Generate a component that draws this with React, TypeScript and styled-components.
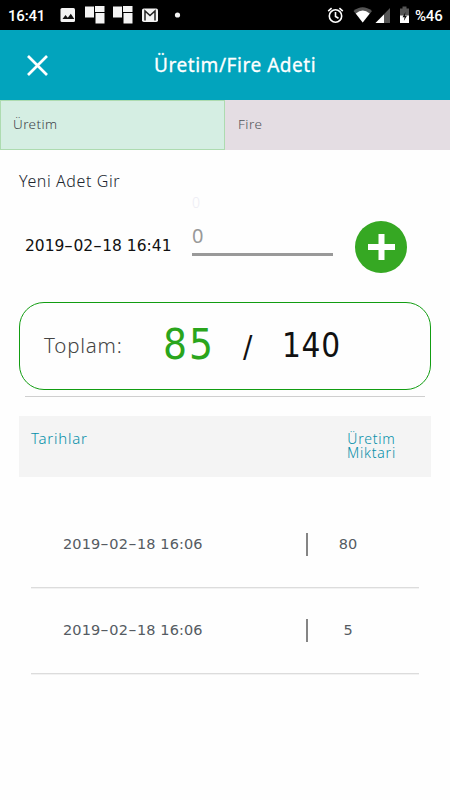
import React from "react";
import styled, { createGlobalStyle } from "styled-components";

const GlobalStyle = createGlobalStyle`
  * { box-sizing: border-box; }
  html, body { margin: 0; background: #fefefe; }
  body { font-family: "Noto Sans", "DejaVu Sans", sans-serif; }
`;

const Screen = styled.main`
  display: flex;
  flex-direction: column;
  width: 450px;
  height: 800px;
  overflow: hidden;
  background: #fefefe;
`;

const StatusBar = styled.div`
  display: flex;
  align-items: center;
  height: 30px;
  background: #000;
  color: #fff;
  font: 500 15px/30px Roboto, sans-serif;
`;

const Clock = styled.span`
  width: 60px;
  padding: 2px 0 0 8px;
  letter-spacing: -0.2px;
`;

const StatusIcons = styled.svg`
  flex: none;
  display: block;
`;

const Battery = styled.span`
  padding: 2px 0 0 2px;
  letter-spacing: -0.2px;
`;

const Header = styled.header`
  display: flex;
  align-items: center;
  height: 70px;
  background: #02a4bd;
  color: #fff;
`;

const CloseButton = styled.button`
  width: 75px;
  height: 70px;
  padding: 0 0 0 27px;
  border: 0;
  background: none;
  svg { display: block; }
`;

type Face = "text" | "narrow" | "wide";

const families: Record<Face, string> = {
  text: '"Noto Sans"',
  narrow: '"DejaVu Sans Condensed", "DejaVu Sans"',
  wide: '"DejaVu Sans"',
};

const Label = styled.span<{ $size: number; $gap?: number; $color?: string; $weight?: number; $face?: Face }>`
  display: block;
  font-family: ${(p) => families[p.$face ?? "text"]}, sans-serif;
  font-stretch: ${(p) => (p.$face === "narrow" ? "condensed" : "normal")};
  font-size: ${(p) => p.$size}px;
  font-weight: ${(p) => p.$weight ?? 400};
  letter-spacing: ${(p) => p.$gap ?? 0}px;
  color: ${(p) => p.$color ?? "inherit"};
  line-height: 1;
  white-space: nowrap;
`;

const Dash = styled.span`
  display: inline-block;
  width: 9px;
  letter-spacing: 0;
  text-align: center;
  transform: scaleX(1.6);
`;

const TitleBox = styled.h1`
  margin: 0;
  padding-left: 79px;
  -webkit-text-stroke: 0.3px #fff;
`;

const Tabs = styled.nav`
  display: grid;
  grid-template-columns: 1fr 1fr;
  height: 50px;
`;

const Tab = styled.button<{ $active?: boolean }>`
  display: flex;
  align-items: center;
  padding: 0 0 0 12px;
  border: 1px solid ${(p) => (p.$active ? "#addbb0" : "#e4dde3")};
  background: ${(p) => (p.$active ? "#d5eee3" : "#e4dde3")};
`;

const SectionTitle = styled.h2`
  margin: 0;
  padding: 23px 0 0 19px;
  height: 43px;
`;

const EntryForm = styled.section`
  display: flex;
  height: 109px;
`;

const EntryDate = styled.div`
  width: 192px;
  padding: 46px 0 0 25px;
`;

const Field = styled.div`
  display: flex;
  flex-direction: column;
  width: 141px;
  height: 63px;
  padding: 3px 0 0;
  border-bottom: 3px solid #999;
`;

const FieldValue = styled.div`
  padding-top: 16px;
`;

const AddButton = styled.button`
  width: 52px;
  height: 52px;
  margin: 28px 0 0 22px;
  padding: 0;
  border: 0;
  border-radius: 50%;
  background: #36a823;
  svg { display: block; }
`;

const Total = styled.section`
  display: flex;
  align-items: center;
  height: 88px;
  margin: 0 19px;
  padding: 0 0 2px 24px;
  border: 1.4px solid #129d12;
  border-radius: 25px;
`;

const TotalLabel = styled.div` width: 119px; `;
const Done = styled.div` width: 80px; `;
const Slash = styled.div` width: 39px; padding-top: 2px; `;

const Divider = styled.hr`
  width: 400px;
  height: 1px;
  margin: 6px 25px 19px;
  border: 0;
  background: #cfcfcf;
`;

const TableHead = styled.div`
  display: flex;
  justify-content: space-between;
  height: 61px;
  margin: 0 19px 25px;
  padding: 15px 35px 0 12px;
  background: #f4f4f4;
`;

const AmountHead = styled.div`
  display: flex;
  flex-direction: column;
  align-items: center;
  padding-top: 1px;
`;

const Row = styled.div`
  display: flex;
  align-items: center;
  height: 86px;
  margin: 0 31px;
  border-bottom: 1px solid #dcdcdc;
  box-shadow: 0 1px #f2f2f2;
`;

const RowDate = styled.div` width: 275px; padding: 0 0 1px 32px; `;
const Bar = styled.i` width: 2px; height: 23px; background: #858585; `;
const Amount = styled.div` width: 80px; padding-bottom: 1px; text-align: center; `;

function Stamp({ value }: { value: string }) {
  return (
    <>
      {value.split("-").map((part, i) => (
        <React.Fragment key={i}>
          {i > 0 && <Dash>-</Dash>}
          {part}
        </React.Fragment>
      ))}
    </>
  );
}

const rows = [
  { date: "2019-02-18 16:06", amount: 80 },
  { date: "2019-02-18 16:06", amount: 5 },
];

export default function App() {
  return (
    <Screen>
      <GlobalStyle />
      <StatusBar>
        <Clock>16:41</Clock>
        <StatusIcons width="266" height="30" viewBox="60 0 266 30" fill="#f3f3f3">
          <rect x="60.5" y="8" width="14.5" height="14" rx="1.5" />
          <path d="M62.5 19l3-4 2.3 2.8 3-4 3.5 5.2z" fill="#111" />
          {[85, 113].map((x) => (
            <g key={x}>
              <rect x={x} y="6.5" width="9" height="11" />
              <rect x={x + 10} y="6" width="9.5" height="6" />
              <rect x={x + 10.5} y="13" width="9" height="10.5" />
            </g>
          ))}
          <rect x="142" y="8.5" width="16" height="13.5" rx="1.8" />
          <path d="M145 20.5V11l5 4.5 5-4.5v9.5" fill="none" stroke="#222" strokeWidth="1.5" />
          <circle cx="177.5" cy="15" r="2.6" />
        </StatusIcons>
        <StatusIcons width="87" height="30" viewBox="326 0 87 30">
          <g fill="none" stroke="#fff" strokeWidth="1.6">
            <circle cx="335.5" cy="16" r="6.2" />
            <path d="M335.5 12v4.5l3 1.8M328.2 11.2l3.4-3M342.8 11.2l-3.4-3" />
          </g>
          <path d="M353.5 11Q362.5 3.500 372 11L362.700 22.500z" fill="#555" />
          <path d="M355.800 13.500Q362.700 7.500 369.700 13.500L362.700 22.500z" fill="#fff" />
          <path d="M375.500 23L390 8v15z" fill="#555" />
          <path d="M375.500 23l8.500-8.500V23z" fill="#fff" />
          <path d="M400 8.500h2.500v-2h4v2h2.500V16h-9z" fill="#555" />
          <path d="M400 15.500h9V23h-9z" fill="#fff" />
          <path d="M405.500 12l-3 5.200h2.100l-.8 3.800 3.200-5.200h-2.100z" fill="#111" />
        </StatusIcons>
        <Battery>%46</Battery>
      </StatusBar>

      <Header>
        <CloseButton aria-label="Kapat">
          <svg width="21" height="21" viewBox="0 0 21 21" fill="none" stroke="#fff" strokeWidth="2.7">
            <path d="M1 1l19 19M20 1L1 20" />
          </svg>
        </CloseButton>
        <TitleBox><Label $size={19} $gap={0.55}>Üretim/Fire Adeti</Label></TitleBox>
      </Header>

      <Tabs>
        <Tab $active><Label $size={13.5} $weight={300} $gap={0.4} $color="#3f444a">Üretim</Label></Tab>
        <Tab><Label $size={13.5} $weight={300} $gap={0.5} $color="#50555a">Fire</Label></Tab>
      </Tabs>

      <SectionTitle><Label $size={16} $weight={300} $gap={0.6} $color="#20262e">Yeni Adet Gir</Label></SectionTitle>

      <EntryForm>
        <EntryDate><Label $face="wide" $size={15.5} $color="#111"><Stamp value="2019-02-18 16:41" /></Label></EntryDate>
        <Field>
          <Label $size={14} $weight={300} $color="#ececf4">0</Label>
          <FieldValue><Label $size={20} $color="#999">0</Label></FieldValue>
        </Field>
        <AddButton aria-label="Ekle">
          <svg width="52" height="52" viewBox="0 0 52 52" stroke="#fff" strokeWidth="6">
            <path d="M13 26h27M26.500 13v26" />
          </svg>
        </AddButton>
      </EntryForm>

      <Total>
        <TotalLabel><Label $size={20.5} $weight={300} $gap={0.8} $color="#444">Toplam:</Label></TotalLabel>
        <Done><Label $face="narrow" $size={42} $gap={2} $color="#2aa51c">85</Label></Done>
        <Slash><Label $face="narrow" $size={31} $color="#111">/</Label></Slash>
        <Label $face="narrow" $size={33} $gap={0.7} $color="#111">140</Label>
      </Total>
      <Divider />

      <TableHead>
        <Label $size={15} $weight={300} $gap={0.75} $color="#048fa9">Tarihlar</Label>
        <AmountHead>
          <Label $size={14} $weight={300} $gap={0.8} $color="#048fa9">Üretim</Label>
          <Label $size={14} $weight={300} $gap={0.8} $color="#048fa9">Miktari</Label>
        </AmountHead>
      </TableHead>

      {rows.map((row, i) => (
        <Row key={i}>
          <RowDate><Label $face="wide" $size={14.5} $gap={0.1} $color="#555b62"><Stamp value={row.date} /></Label></RowDate>
          <Bar />
          <Amount><Label $face="wide" $size={14.5} $color="#555b62">{row.amount}</Label></Amount>
        </Row>
      ))}
    </Screen>
  );
}
